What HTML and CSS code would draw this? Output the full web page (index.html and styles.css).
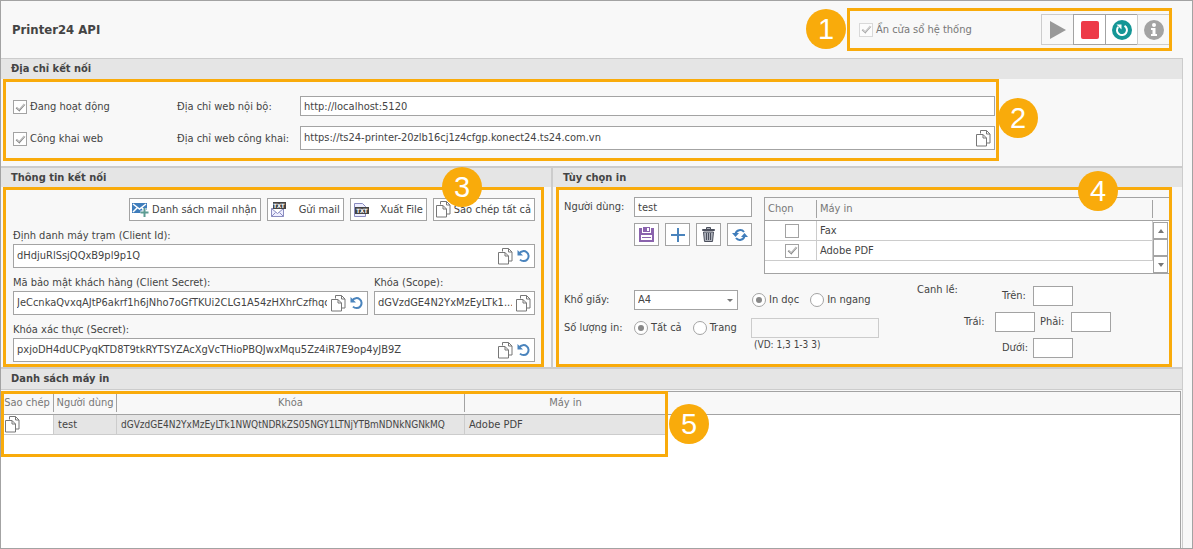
FILE: index.html
```html
<!DOCTYPE html>
<html lang="vi">
<head>
    <meta charset="UTF-8">
    <meta name="viewport" content="width=device-width, initial-scale=1.0">
    <title>Printer24 API</title>
    <link rel="stylesheet" href="styles.css">
</head>
<body>
    <svg class="sprite" aria-hidden="true">
        <symbol id="copy" viewBox="0 0 15 17">
            <path d="M4.5 3.5V.5h6l3.500 3.500v9h-3M10.500 .5V4H14" fill="none" stroke="#777"/>
            <path d="M.5 4.500h6.500l3.500 3.500v8H.5zM7 4.500V8h3.500" fill="#fff" stroke="#777"/>
        </symbol>
        <symbol id="undo" viewBox="0 0 14 14">
            <path d="M2.500 4.200A5 5 0 1 1 3 10.600" fill="none" stroke="#4a84bd" stroke-width="2"/>
            <path d="M.5 1v5.500H6z" fill="#4a84bd"/>
        </symbol>
    </svg>

    <div class="window">
        <header class="top">
            <h1>Printer24 API</h1>
            <div class="callout toolbar">
                <span class="badge badge-1">1</span>
                <label class="check disabled"><input type="checkbox" checked disabled> Ẩn cửa sổ hệ thống</label>
                <div class="tools">
                    <button type="button" aria-label="Start" disabled>
                        <svg width="18" height="20" viewBox="0 0 18 20"><path d="M1 1l16 9-16 9z" fill="#999"/></svg>
                    </button>
                    <button type="button" aria-label="Stop">
                        <svg width="18" height="18" viewBox="0 0 18 18"><rect width="18" height="18" rx="2" fill="#ed3b48"/></svg>
                    </button>
                    <button type="button" aria-label="Restart">
                        <svg width="20" height="20" viewBox="0 0 20 20">
                            <circle cx="10" cy="10" r="10" fill="#149696"/>
                            <path d="M12.500 5.800A5 5 0 1 1 6.200 6.800" fill="none" stroke="#fff" stroke-width="2"/>
                            <path d="M4.500 4.500h5v5z" fill="#fff"/>
                        </svg>
                    </button>
                    <button type="button" aria-label="Info" disabled>
                        <svg width="20" height="20" viewBox="0 0 20 20">
                            <circle cx="10" cy="10" r="10" fill="#a3a3a3"/>
                            <circle cx="10" cy="5" r="2" fill="#fff"/>
                            <path d="M7 8h4.500v6H13v2H7v-2h1.500v-4H7z" fill="#fff"/>
                        </svg>
                    </button>
                </div>
            </div>
        </header>

        <main class="content">
            <section>
                <h2>Địa chỉ kết nối</h2>
                <div class="callout address">
                    <span class="badge badge-2">2</span>
                    <label class="check"><input type="checkbox" checked> Đang hoạt động</label>
                    <label for="local-url">Địa chỉ web nội bộ:</label>
                    <input class="box" id="local-url" type="text" value="http://localhost:5120">
                    <label class="check"><input type="checkbox" checked> Công khai web</label>
                    <label for="public-url">Địa chỉ web công khai:</label>
                    <div class="field">
                        <input id="public-url" type="text" value="https://ts24-printer-20zlb16cj1z4cfgp.konect24.ts24.com.vn">
                        <button type="button" aria-label="Copy"><svg width="15" height="17"><use href="#copy"/></svg></button>
                    </div>
                </div>
            </section>

            <div class="columns">
                <section class="connection">
                    <h2>Thông tin kết nối</h2>
                    <div class="callout">
                        <span class="badge badge-3">3</span>
                        <div class="actions">
                            <button type="button">
                                <svg width="17" height="16" viewBox="0 0 17 16">
                                    <path d="M0 1h15v7h-3v3H0z" fill="#3f7dbb"/>
                                    <path d="M1 2l6.500 5L14 2M1 10l4.500-4.500M10 6l2 2" fill="none" stroke="#fff" stroke-width="1.500"/>
                                    <path d="M12.500 6v9M8.500 10.500h8" stroke="#fff" stroke-width="4"/>
                                    <path d="M12.500 6v9M8.500 10.500h8" stroke="#5d9c93" stroke-width="2"/>
                                </svg>
                                Danh sách mail nhận
                            </button>
                            <button type="button">
                                <svg width="16" height="16" viewBox="0 0 16 16">
                                    <path d="M1.500 6.500h12v8h-12zl6 5 6-5M1.500 14.500l4-4M13.500 14.500l-4-4" fill="#eef" stroke="#8a8cc0"/>
                                    <rect x="3" width="13" height="7" fill="#444"/>
                                    <text class="txt" x="9" y="6">TXT</text>
                                </svg>
                                Gửi mail
                            </button>
                            <button type="button">
                                <svg width="16" height="16" viewBox="0 0 16 16">
                                    <path d="M1.500 1.500h8l3 3v10h-11z" fill="#eef" stroke="#8a8cc0"/>
                                    <rect x="2" y="5" width="14" height="7" fill="#444"/>
                                    <text class="txt" x="9" y="11">TXT</text>
                                </svg>
                                Xuất File
                            </button>
                            <button type="button">
                                <svg width="15" height="17"><use href="#copy"/></svg>
                                Sao chép tất cả
                            </button>
                        </div>
                        <div class="secrets">
                            <div class="wide">
                                <label for="client-id">Định danh máy trạm (Client Id):</label>
                                <div class="field">
                                    <input id="client-id" type="text" value="dHdjuRlSsjQQxB9pl9p1Q">
                                    <button type="button" aria-label="Copy"><svg width="15" height="17"><use href="#copy"/></svg></button>
                                    <button type="button" aria-label="Renew"><svg width="14" height="14"><use href="#undo"/></svg></button>
                                </div>
                            </div>
                            <div>
                                <label for="client-secret">Mã bảo mật khách hàng (Client Secret):</label>
                                <div class="field">
                                    <input id="client-secret" type="text" value="JeCcnkaQvxqAJtP6akrf1h6jNho7oGfTKUi2CLG1A54zHXhrCzfhqc">
                                    <button type="button" aria-label="Copy"><svg width="15" height="17"><use href="#copy"/></svg></button>
                                    <button type="button" aria-label="Renew"><svg width="14" height="14"><use href="#undo"/></svg></button>
                                </div>
                            </div>
                            <div>
                                <label for="scope">Khóa (Scope):</label>
                                <div class="field">
                                    <input id="scope" type="text" value="dGVzdGE4N2YxMzEyLTk1...">
                                    <button type="button" aria-label="Copy"><svg width="15" height="17"><use href="#copy"/></svg></button>
                                </div>
                            </div>
                            <div class="wide">
                                <label for="secret">Khóa xác thực (Secret):</label>
                                <div class="field">
                                    <input id="secret" type="text" value="pxjoDH4dUCPyqKTD8T9tkRYTSYZAcXgVcTHioPBQJwxMqu5Zz4iR7E9op4yJB9Z">
                                    <button type="button" aria-label="Copy"><svg width="15" height="17"><use href="#copy"/></svg></button>
                                    <button type="button" aria-label="Renew"><svg width="14" height="14"><use href="#undo"/></svg></button>
                                </div>
                            </div>
                        </div>
                    </div>
                </section>

                <section class="printing">
                    <h2>Tùy chọn in</h2>
                    <div class="callout">
                        <span class="badge badge-4">4</span>
                        <div class="user-row">
                            <label class="name" for="user">Người dùng:</label>
                            <div class="user">
                                <input class="box" id="user" type="text" value="test">
                                <div class="icons">
                                    <button type="button" aria-label="Save">
                                        <svg width="15" height="15" viewBox="0 0 15 15">
                                            <path d="M0 1h3v5h9V1h3v14H0z" fill="#8a63ad"/>
                                            <path d="M4 0h7v5H4z" fill="#8a63ad"/>
                                            <path d="M8 1h2v3H8zM2 8h11v5H2z" fill="#fff"/>
                                            <path d="M3 10.500h9" stroke="#8a63ad"/>
                                        </svg>
                                    </button>
                                    <button type="button" aria-label="Add">
                                        <svg width="14" height="14" viewBox="0 0 14 14"><path d="M7 0v14M0 7h14" stroke="#4a84bd" stroke-width="2"/></svg>
                                    </button>
                                    <button type="button" aria-label="Delete">
                                        <svg width="13" height="15" viewBox="0 0 13 15">
                                            <path d="M4.500 2V.5h4V2M.5 3.500v-1h12v1zM1.500 5h10l-1 9.500h-8z" fill="#aeb2bb" stroke="#4b4f5c"/>
                                            <path d="M4.500 6v7M6.500 6v7M8.500 6v7" stroke="#4b4f5c"/>
                                        </svg>
                                    </button>
                                    <button type="button" aria-label="Reload">
                                        <svg width="16" height="14" viewBox="0 0 16 14">
                                            <path d="M3.500 6A4.800 4.800 0 0 1 12 4M12.500 8A4.800 4.800 0 0 1 4 10" fill="none" stroke="#3f7dbb" stroke-width="2"/>
                                            <path d="M0 5h7L3.500 9zM16 9H9l3.500-4z" fill="#3f7dbb"/>
                                        </svg>
                                    </button>
                                </div>
                            </div>
                            <div class="printers">
                                <table>
                                    <thead>
                                        <tr><th class="pick"><span>Chọn</span></th><th><span>Máy in</span></th></tr>
                                    </thead>
                                    <tbody>
                                        <tr><td class="pick"><input type="checkbox" aria-label="Fax"></td><td>Fax</td></tr>
                                        <tr><td class="pick"><input type="checkbox" aria-label="Adobe PDF" checked></td><td>Adobe PDF</td></tr>
                                    </tbody>
                                </table>
                                <div class="scroll">
                                    <button type="button" aria-label="Up"><svg width="6" height="4" viewBox="0 0 6 4"><path d="M0 4l3-4 3 4z" fill="#777"/></svg></button>
                                    <div class="thumb"></div>
                                    <button type="button" aria-label="Down"><svg width="6" height="4" viewBox="0 0 6 4"><path d="M0 0l3 4 3-4z" fill="#777"/></svg></button>
                                </div>
                            </div>
                        </div>

                        <div class="page-row">
                            <div class="page">
                                <div class="line">
                                    <label class="name" for="paper">Khổ giấy:</label>
                                    <div class="select"><select id="paper"><option>A4</option></select></div>
                                    <label class="radio"><input type="radio" name="direction" checked> In dọc</label>
                                    <label class="radio"><input type="radio" name="direction"> In ngang</label>
                                </div>
                                <div class="line">
                                    <span class="name">Số lượng in:</span>
                                    <div class="range">
                                        <label class="radio"><input type="radio" name="range" checked> Tất cả</label>
                                        <label class="radio"><input type="radio" name="range"> Trang</label>
                                    </div>
                                    <input class="box pages" type="text" aria-label="Trang" disabled>
                                </div>
                                <div class="hint">(VD: 1,3 1-3 3)</div>
                            </div>
                            <div class="margin-title">Canh lề:</div>
                            <div class="margins">
                                <div class="line"><label for="m-top">Trên:</label><input class="box" id="m-top" type="text"></div>
                                <div class="line">
                                    <label for="m-left">Trái:</label><input class="box" id="m-left" type="text">
                                    <label for="m-right">Phải:</label><input class="box" id="m-right" type="text">
                                </div>
                                <div class="line"><label for="m-bottom">Dưới:</label><input class="box" id="m-bottom" type="text"></div>
                            </div>
                        </div>
                    </div>
                </section>
            </div>

            <section class="list">
                <h2>Danh sách máy in</h2>
                <div class="grid">
                    <div class="callout outline"><span class="badge badge-5">5</span></div>
                    <table>
                        <thead>
                            <tr>
                                <th class="c-copy"><span>Sao chép</span></th>
                                <th class="c-user"><span>Người dùng</span></th>
                                <th class="c-key"><span>Khóa</span></th>
                                <th class="c-printer"><span>Máy in</span></th>
                                <th></th>
                            </tr>
                        </thead>
                        <tbody>
                            <tr>
                                <td class="copy"><button type="button" aria-label="Copy"><svg width="15" height="17"><use href="#copy"/></svg></button></td>
                                <td>test</td>
                                <td class="key">dGVzdGE4N2YxMzEyLTk1NWQtNDRkZS05NGY1LTNjYTBmNDNkNGNkMQ</td>
                                <td>Adobe PDF</td>
                                <td class="rest"></td>
                            </tr>
                        </tbody>
                    </table>
                </div>
            </section>
        </main>
    </div>
</body>
</html>
```
FILE: styles.css
```css
* {
    box-sizing: border-box;
}
body {
    margin: 0;
    font-family: "DejaVu Sans Condensed", "DejaVu Sans", sans-serif;
    font-stretch: condensed;
    font-size: 11px;
    line-height: 16px;
    color: #444;
}
input, button, select {
    font: inherit;
    color: inherit;
    margin: 0;
}
button {
    display: flex;
    align-items: center;
    justify-content: center;
    padding: 0;
    border: 1px solid #a3a3a3;
    background: #fff;
}
.sprite {
    position: absolute;
    width: 0;
    height: 0;
}
.txt {
    font-size: 6px;
    font-weight: bold;
    fill: #fff;
    text-anchor: middle;
}
.window {
    display: flex;
    flex-direction: column;
    min-height: 100vh;
    border: 1px solid #a3a3a3;
    background: #f8f8f8;
}
h1, h2 {
    margin: 0;
    line-height: 20px;
}
h1 {
    font-size: 13px;
}
h2 {
    padding-left: 10px;
    height: 21px;
    font-size: 11px;
    background: #e5e5e5;
    border-top: 1px solid #ccc;
}

/* Highlighted areas and their numbers */
.callout {
    position: relative;
    border: 3px solid #f9ab0b;
}
.badge {
    position: absolute;
    z-index: 2;
    width: 40px;
    height: 40px;
    border-radius: 50%;
    background: #f9ab0b;
    color: #fff;
    font: 29px/40px "Liberation Sans", Arial, sans-serif;
    text-align: center;
}
.badge-1 { left: -44px; top: -2px; }
.badge-2 { right: -42px; top: 16px; }
.badge-3 { right: 59px; top: -23px; }
.badge-4 { right: 51px; top: -19px; }
.badge-5 { right: -44px; top: 10px; }

/* Header */
.top {
    display: flex;
    align-items: center;
    justify-content: space-between;
    height: 57px;
    padding: 0 20px 0 11px;
}
.toolbar {
    display: flex;
    align-items: center;
    justify-content: space-between;
    width: 325px;
    height: 43px;
    padding-left: 9px;
}
.tools {
    display: flex;
}
.tools button {
    width: 32px;
    height: 31px;
    border-right: 0;
}
.tools button:disabled {
    background: #f8f8f8;
    border-color: #ccc;
}

/* Check boxes and radios */
.check, .radio {
    display: flex;
    align-items: center;
    gap: 3px;
    white-space: nowrap;
}
.disabled {
    color: #777;
}
input[type="checkbox"], input[type="radio"] {
    appearance: none;
    display: grid;
    place-items: center;
    flex: none;
    width: 14px;
    height: 14px;
    border: 1px solid #a3a3a3;
    background: #fff;
}
input[type="radio"] {
    border-radius: 50%;
}
input[type="checkbox"]:checked::after {
    content: "";
    width: 8px;
    height: 4px;
    margin-bottom: 2px;
    border: solid #888;
    border-width: 0 0 1px 1px;
    box-shadow: inset 1px -1px #bbb;
    transform: rotate(-48deg);
}
input[type="radio"]:checked::after {
    content: "";
    width: 6px;
    height: 6px;
    border-radius: 50%;
    background: #888;
}
input[type="checkbox"]:disabled {
    border-color: #ccc;
    opacity: .7;
}

/* Text boxes */
.box, .field {
    width: 100%;
    min-width: 0;
    border: 1px solid #a3a3a3;
    background: #fff;
}
.box {
    height: 20px;
    padding: 0 3px;
}
.box:disabled {
    background: #f8f8f8;
    border-color: #ccc;
}
.field {
    display: flex;
    align-items: center;
    height: 24px;
    padding: 0 3px;
    gap: 4px;
}
.field input {
    flex: 1;
    min-width: 0;
    padding: 0;
    border: 0;
    background: none;
}
.field button, .copy button {
    border: 0;
    background: none;
}

.content {
    display: flex;
    flex-direction: column;
    flex: 1;
    margin-right: 9px;
    border-right: 1px solid #ccc;
}
.address {
    display: grid;
    grid-template-columns: 164px 123px 1fr;
    row-gap: 10px;
    align-items: center;
    margin: 0 183px 5px 2px;
    padding: 14px 1px 8px 7px;
}
.address label {
    padding-top: 2px;
}
.columns {
    display: grid;
    grid-template-columns: 552fr 629fr;
}
.columns h2, .list h2 {
    border-top-width: 2px;
}

/* Connection */
.connection {
    border-right: 2px solid #ccc;
}
.connection .callout {
    margin: 0 7px 0 2px;
    padding: 8px 6px 2px 7px;
}
.actions {
    display: flex;
    justify-content: flex-end;
    gap: 6px;
}
.actions button {
    height: 23px;
    min-width: 77px;
    padding: 0 3px 0 2px;
    gap: 3px;
    justify-content: space-between;
    white-space: nowrap;
}
.secrets {
    display: grid;
    grid-template-columns: minmax(0, 1fr) 161px;
    column-gap: 6px;
}
.secrets label {
    display: block;
    padding-top: 6px;
    line-height: 17px;
}
.wide {
    grid-column: 1 / -1;
}

/* Print options */
.printing .callout {
    margin: 0 10px 0 3px;
    height: 180px;
    padding: 7px 0 0 5px;
}
.name {
    flex: none;
    width: 70px;
    line-height: 20px;
}
.user-row {
    display: flex;
}
.user {
    flex: none;
    width: 118px;
    margin-right: 12px;
}
.icons {
    display: flex;
    justify-content: space-between;
    margin-top: 6px;
}
.icons button {
    width: 25px;
    height: 23px;
}
.printers {
    flex: 1;
    display: flex;
    height: 77px;
    border: 1px solid #a3a3a3;
    border-right: 0;
    background: linear-gradient(#f8f8f8 22px, #a3a3a3 22px, #a3a3a3 23px, #fff 23px);
}
table {
    width: 100%;
    border-collapse: separate;
    border-spacing: 0;
    table-layout: fixed;
}
th, td {
    padding: 0;
    font-weight: normal;
    text-align: left;
    white-space: nowrap;
}
th {
    height: 23px;
    color: #777;
    border-bottom: 1px solid #a3a3a3;
}
th span {
    display: block;
    height: 18px;
    line-height: 18px;
    border-right: 1px solid #a3a3a3;
}
td {
    height: 20px;
    border-bottom: 1px solid #ccc;
    border-right: 1px solid #ccc;
}
.printers table {
    flex: 1;
    height: 63px;
}
.printers th span, .printers td {
    padding-left: 3px;
}
.printers .pick {
    width: 52px;
}
.printers .pick input {
    margin: 0 auto;
}
.scroll {
    width: 16px;
    margin-top: 24px;
}
.scroll button, .thumb {
    width: 15px;
    height: 17px;
    border: 1px solid #a3a3a3;
    background: #fff;
}
.page-row {
    display: flex;
    margin-top: 12px;
}
.page {
    flex: none;
    width: 320px;
    margin-right: 33px;
    padding-top: 4px;
}
.line {
    display: flex;
    align-items: center;
}
.page .line + .line {
    margin-top: 8px;
}
.select {
    position: relative;
    width: 104px;
    margin-right: 14px;
}
.select::after {
    content: "";
    position: absolute;
    right: 5px;
    top: 9px;
    border: 3px solid transparent;
    border-top-color: #777;
    pointer-events: none;
}
.select select {
    appearance: none;
    display: block;
    width: 100%;
    height: 20px;
    padding: 0 3px;
    border: 1px solid #a3a3a3;
    border-radius: 0;
    background: #fff;
}
.radio + .radio {
    margin-left: 11px;
}
.range {
    display: flex;
    width: 117px;
}
.pages {
    width: 128px;
}
.hint {
    padding-left: 190px;
    font-size: 10px;
    line-height: 14px;
}
.margin-title {
    flex: none;
    width: 48px;
    line-height: 8px;
}
.margins {
    display: flex;
    flex-direction: column;
    align-items: center;
    gap: 6px;
    width: 145px;
}
.margins .box {
    width: 40px;
}
.margins label {
    width: 31px;
}
.margins .box + label {
    margin-left: 5px;
}

/* Printer list */
.list {
    display: flex;
    flex-direction: column;
    flex: 1;
}
.list h2 {
    height: 23px;
    border-bottom: 1px solid #ccc;
}
.grid {
    position: relative;
    flex: 1;
    margin: 1px 1px 0 0;
    border: 1px solid #a3a3a3;
    border-width: 1px 1px 0 0;
    background: #fff;
}
.outline {
    position: absolute;
    left: 0;
    top: -1px;
    width: 667px;
    height: 66px;
}
.grid th {
    background: #f8f8f8;
    text-align: center;
}
.grid td {
    padding-left: 4px;
    background: #e5e5e5;
}
.grid .copy {
    background: #fff;
}
.grid .key {
    font-size: 10px;
}
.grid .rest {
    background: none;
    border: 0;
}
.c-copy { width: 53px; }
.c-user { width: 63px; }
.c-key { width: 348px; }
.c-printer { width: 201px; }
.c-printer span { border: 0; }
```
